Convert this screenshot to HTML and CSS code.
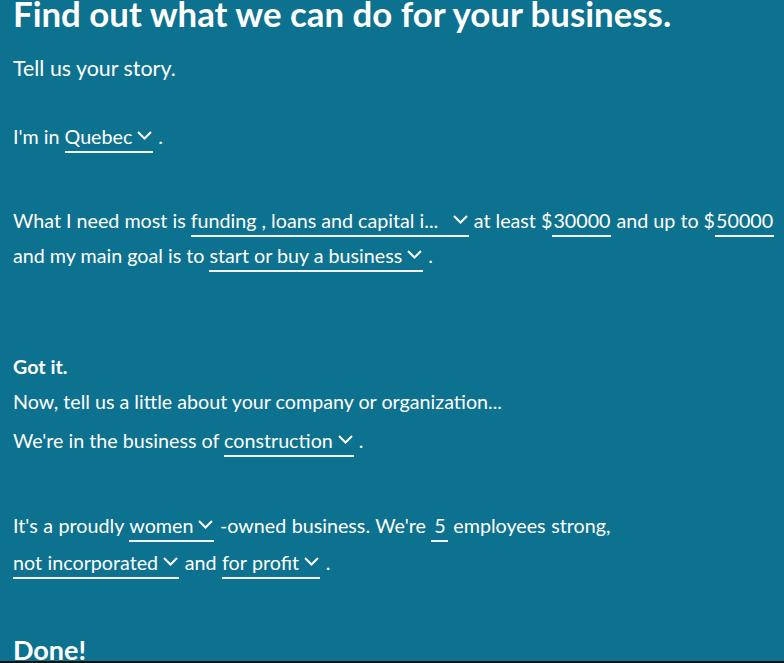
FILE: index.html
```html
<!DOCTYPE html>
<html lang="en">
<head>
    <meta charset="UTF-8">
    <meta name="viewport" content="width=device-width, initial-scale=1.0">
    <title>Tell us your story</title>
    <link rel="stylesheet" href="styles.css">
</head>
<body>

    <div class="story">
        <h1 class="title">Find out what we can do for your business.</h1>
        <p class="lead">Tell us your story.</p>

        <!-- Location -->
        <p class="line line-region">I'm in <span class="pick">Quebec<svg class="chev" width="15" height="9" viewBox="0 0 15 9"><path d="M1 1 L7.5 7.5 L14 1"/></svg></span> .</p>

        <!-- Needs -->
        <p class="line line-needs">What I need most is <span class="pick"><span class="pick-clip">funding , loans and capital i...</span><svg class="chev" width="15" height="9" viewBox="0 0 15 9"><path d="M1 1 L7.5 7.5 L14 1"/></svg></span> at least $<span class="field">30000</span> and up to $<span class="field">50000</span><br>and my main goal is to <span class="pick">start or buy a business<svg class="chev" width="15" height="9" viewBox="0 0 15 9"><path d="M1 1 L7.5 7.5 L14 1"/></svg></span> .</p>

        <!-- Company -->
        <p class="line got-it">Got it.</p>
        <p class="line line-now">Now, tell us a little about your company or organization...</p>
        <p class="line line-sector">We're in the business of <span class="pick">construction<svg class="chev" width="15" height="9" viewBox="0 0 15 9"><path d="M1 1 L7.5 7.5 L14 1"/></svg></span> .</p>

        <p class="line line-owner">It's a proudly <span class="pick">women<svg class="chev" width="15" height="9" viewBox="0 0 15 9"><path d="M1 1 L7.5 7.5 L14 1"/></svg></span> -owned business. We're <span class="field field-small">5</span> employees strong,<br><span class="pick">not incorporated<svg class="chev" width="15" height="9" viewBox="0 0 15 9"><path d="M1 1 L7.5 7.5 L14 1"/></svg></span> and <span class="pick">for profit<svg class="chev" width="15" height="9" viewBox="0 0 15 9"><path d="M1 1 L7.5 7.5 L14 1"/></svg></span> .</p>

        <h2 class="done">Done!</h2>
    </div>

    <div class="edge"></div>

</body>
</html>
```

FILE: styles.css
```css
html, body {
    height: 100%;
}
body {
    font-family: Lato, "Noto Sans", sans-serif;
    background-color: #0d7190;
    color: #fff;
    margin: 0;
    padding: 0;
    overflow: hidden;
}
.story {
    padding: 0 13px;
}
.title {
    font-size: 34.8px;
    font-weight: 700;
    line-height: 27px;
    margin: 0;
}
.lead {
    font-size: 21.4px;
    line-height: 35px;
    margin: 24px 0 0;
}
.line {
    font-size: 19.7px;
    line-height: 35px;
    margin: 0;
    white-space: nowrap;
}
.line-region {
    margin-top: 33px;
}
.line-needs {
    margin-top: 49px;
}
.got-it {
    font-weight: 700;
    margin-top: 76px;
}
.line-now {
    margin-top: 0;
}
.line-sector {
    margin-top: 4px;
}
.line-owner {
    margin-top: 49px;
    line-height: 37px;
    word-spacing: 0.5px;
}
.pick, .field {
    display: inline-block;
    line-height: 1.2;
    padding-bottom: 2px;
    border-bottom: 2px solid #f2f2f2;
}
.pick-clip {
    display: inline-block;
    width: 257px;
}
.field {
    padding: 0 1px 2px;
}
.field-small {
    padding: 0 2px 2px 3px;
}
.chev {
    margin-left: 5px;
    margin-right: 1px;
    vertical-align: 4px;
    fill: none;
    stroke: #fff;
    stroke-width: 2;
}
.done {
    font-size: 27px;
    font-weight: 700;
    line-height: 30px;
    margin: 54px 0 0;
}
.edge {
    position: fixed;
    left: 0;
    right: 0;
    bottom: 0;
    height: 2px;
    background: #111;
}
```
